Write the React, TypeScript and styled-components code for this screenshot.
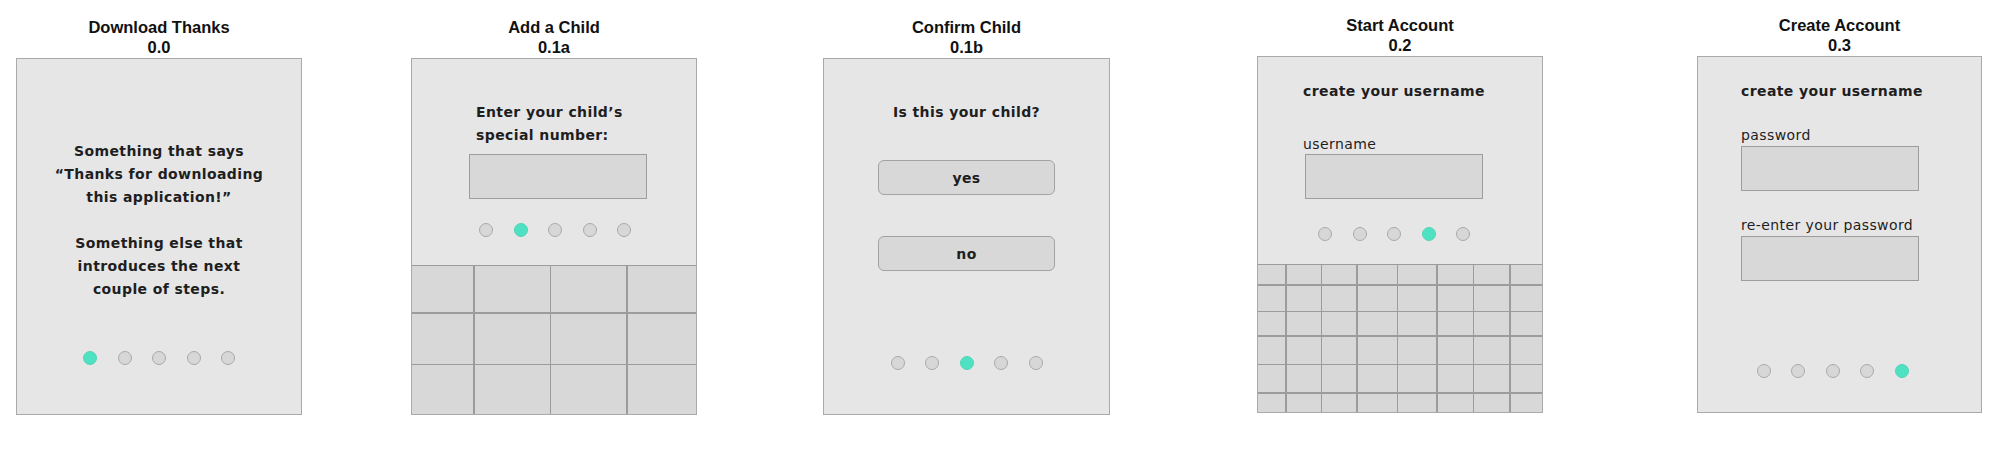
import React from 'react';
import styled, { createGlobalStyle } from 'styled-components';

const GlobalStyle = createGlobalStyle`
  html, body {
    margin: 0;
    padding: 0;
    background: #ffffff;
  }
`;

const sketchFont = `"Comic Sans MS", "DejaVu Sans", sans-serif`;

const Board = styled.div`
  display: flex;
  align-items: flex-start;
  width: 1999px;
  height: 463px;
  background: #ffffff;
`;

const Screen = styled.div<{ $left: number; $top: number }>`
  display: flex;
  flex-direction: column;
  align-items: center;
  margin-left: ${({ $left }) => $left}px;
  padding-top: ${({ $top }) => $top}px;
`;

const Title = styled.div`
  font-family: "Liberation Sans", Arial, sans-serif;
  font-weight: bold;
  font-size: 16.5px;
  line-height: 20px;
  color: #111;
  text-align: center;
  margin-bottom: 1px;
`;

const Frame = styled.div<{ $width?: number }>`
  box-sizing: border-box;
  width: ${({ $width }) => $width ?? 286}px;
  height: 357px;
  background: #e7e6e7;
  border: 1.5px solid #aaaaaa;
  display: flex;
  flex-direction: column;
  overflow: hidden;
`;

const Body = styled.div<{ $pad: string; $align?: string }>`
  display: flex;
  flex-direction: column;
  align-items: ${({ $align }) => $align ?? 'center'};
  padding: ${({ $pad }) => $pad};
`;

const Sketch = styled.div<{ $bold?: boolean; $center?: boolean }>`
  font-family: ${sketchFont};
  font-weight: ${({ $bold }) => ($bold ? 'bold' : 'normal')};
  font-size: 14px;
  letter-spacing: 0.4px;
  line-height: 23px;
  color: #1e1e1e;
  text-align: ${({ $center }) => ($center ? 'center' : 'left')};
  white-space: pre-line;
`;

const Field = styled.div`
  box-sizing: border-box;
  width: 178px;
  height: 45px;
  background: #d8d8d8;
  border: 1.5px solid #9d9d9d;
`;

const Choice = styled.div`
  box-sizing: border-box;
  width: 177px;
  height: 35px;
  background: #d8d8d8;
  border: 1.5px solid #a3a3a3;
  border-radius: 6px;
  display: flex;
  align-items: center;
  justify-content: center;
  font-family: ${sketchFont};
  font-weight: bold;
  font-size: 14px;
  letter-spacing: 0.4px;
  color: #1e1e1e;
`;

/* $shift moves the row of dots left (negative) or right (positive) of centre */
const Dots = styled.div<{ $top: number; $shift: number }>`
  align-self: stretch;
  display: flex;
  justify-content: center;
  gap: 20.5px;
  margin-top: ${({ $top }) => $top}px;
  padding-left: ${({ $shift }) => Math.max(0, $shift * 2)}px;
  padding-right: ${({ $shift }) => Math.max(0, -$shift * 2)}px;
`;

const Dot = styled.span<{ $on: boolean }>`
  box-sizing: border-box;
  width: 14px;
  height: 14px;
  border-radius: 50%;
  background: ${({ $on }) => ($on ? '#4fe2c2' : '#d7d7d7')};
  border: 1.5px solid ${({ $on }) => ($on ? '#52d4b6' : '#a9a9a9')};
`;

const Keypad = styled.div<{ $cols: string; $rows: string; $height: number }>`
  box-sizing: border-box;
  display: grid;
  grid-template-columns: ${({ $cols }) => $cols};
  grid-template-rows: ${({ $rows }) => $rows};
  gap: 1.5px;
  height: ${({ $height }) => $height}px;
  background: #9c9c9c;
  border-top: 1.5px solid #9c9c9c;
  margin-top: auto;
`;

const Key = styled.div`
  background: #d8d8d8;
`;

const Pager = ({ active, top, shift = 0 }: { active: number; top: number; shift?: number }) => (
  <Dots $top={top} $shift={shift}>
    {[0, 1, 2, 3, 4].map((i) => (
      <Dot key={i} $on={i === active} />
    ))}
  </Dots>
);

const keys = (n: number) => Array.from({ length: n }, (_, i) => <Key key={i} />);

const App: React.FC = () => (
  <Board>
    <GlobalStyle />

    <Screen $left={16} $top={17}>
      <Title>Download Thanks<br />0.0</Title>
      <Frame>
        <Body $pad="81px 0 0">
          <Sketch $bold $center>
            {'Something that says\n\u201CThanks for downloading\nthis application!\u201D\n\nSomething else that\nintroduces the next\ncouple of steps.'}
          </Sketch>
          <Pager active={0} top={50} />
        </Body>
      </Frame>
    </Screen>

    <Screen $left={109} $top={17}>
      <Title>Add a Child<br />0.1a</Title>
      <Frame>
        <Body $pad="42px 0 0 57px" $align="flex-start">
          <Sketch $bold style={{ marginLeft: 7 }}>
            {'Enter your child\u2019s\nspecial number:'}
          </Sketch>
          <Field style={{ marginTop: 7 }} />
        </Body>
        <Pager active={1} top={24} shift={1} />
        <Keypad $cols="61px 75px 75px 1fr" $rows="46px 50px 1fr" $height={149}>
          {keys(12)}
        </Keypad>
      </Frame>
    </Screen>

    <Screen $left={126} $top={17}>
      <Title>Confirm Child<br />0.1b</Title>
      <Frame $width={287}>
        <Body $pad="42px 0 0">
          <Sketch $bold $center>Is this your child?</Sketch>
          <Choice style={{ marginTop: 36 }}>yes</Choice>
          <Choice style={{ marginTop: 41 }}>no</Choice>
          <Pager active={2} top={85} />
        </Body>
      </Frame>
    </Screen>

    <Screen $left={147} $top={15}>
      <Title>Start Account<br />0.2</Title>
      <Frame>
        <Body $pad="23px 0 0 45px" $align="flex-start">
          <Sketch $bold>create your username</Sketch>
          <Sketch style={{ marginTop: 30 }}>username</Sketch>
          <Field style={{ marginTop: -2, marginLeft: 2 }} />
        </Body>
        <Pager active={3} top={28} shift={-6} />
        <Keypad
          $cols="27px 34px 34px 39px 38px 35px 35px 1fr"
          $rows="19px 25px 23px 27px 27px 1fr"
          $height={148}
        >
          {keys(48)}
        </Keypad>
      </Frame>
    </Screen>

    <Screen $left={154} $top={15}>
      <Title>Create Account<br />0.3</Title>
      <Frame $width={285}>
        <Body $pad="23px 0 0 43px" $align="flex-start">
          <Sketch $bold>create your username</Sketch>
          <Sketch style={{ marginTop: 21 }}>password</Sketch>
          <Field style={{ marginTop: -1 }} />
          <Sketch style={{ marginTop: 23 }}>re-enter your password</Sketch>
          <Field style={{ marginTop: -1 }} />
        </Body>
        <Pager active={4} top={83} shift={-7} />
      </Frame>
    </Screen>
  </Board>
);

export default App;
